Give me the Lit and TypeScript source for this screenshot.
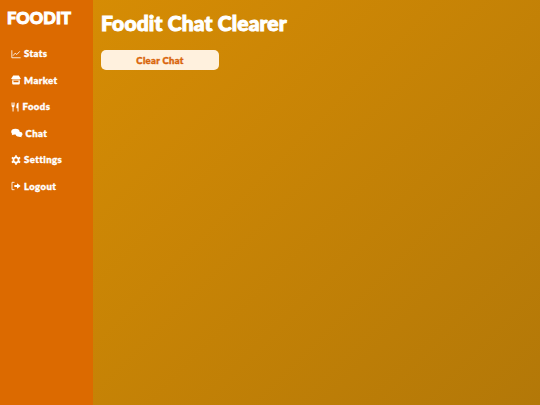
import { LitElement, html, css, svg } from "lit";
import { customElement } from "lit/decorators.js";

const icons: Record<string, unknown> = {
  stats: svg`<path d="M1 1.5V10.5H11.5" fill="none" stroke="currentColor" stroke-width="1"/><path d="M2.5 8L5 5L7 6.6L10.5 2.8" fill="none" stroke="currentColor" stroke-width="1"/>`,
  market: svg`<path d="M2.6 .6H9.4L11.4 4Q11.4 5.4 9.8 5.4H2.2Q.6 5.4 .6 4Z" fill="currentColor"/><path d="M1.4 6.3H10.6V10Q10.6 11.4 9.4 11.4H2.6Q1.4 11.4 1.4 10ZM3 7V8.6H9V7Z" fill="currentColor" fill-rule="evenodd"/>`,
  foods: svg`<path d="M.8 .6V4.6Q.8 6 2.2 6.4V11.4H3.6V6.4Q5 6 5 4.6V.6H4V4H3.4V.6H2.4V4H1.8V.6Z" fill="currentColor"/><path d="M10.6 11.4V.6Q7.6 1.2 7.6 4.4V7.4H9.2V11.4Z" fill="currentColor"/>`,
  chat: svg`<ellipse cx="4.6" cy="4.4" rx="4.4" ry="3.5" fill="currentColor"/><path d="M1.5 6L.8 8.6L4 7.2Z" fill="currentColor"/><ellipse cx="8.4" cy="7.5" rx="3.5" ry="2.9" fill="currentColor"/><path d="M10 9L11.6 11L8 10.2Z" fill="currentColor"/>`,
  settings: svg`<circle cx="6" cy="6" r="3.1" fill="none" stroke="currentColor" stroke-width="2.2"/><path d="M6 .4V2.4M6 9.6V11.6M1 3.1L2.7 4.1M9.3 7.9L11 8.9M1 8.9L2.7 7.9M9.3 4.1L11 3.1" stroke="currentColor" stroke-width="2"/>`,
  logout: svg`<path d="M4.2 1.6H1.2V10.4H4.2" fill="none" stroke="currentColor" stroke-width="1"/><path d="M4 4.9H7.2V2.6L11.6 6L7.2 9.4V7.1H4Z" fill="currentColor"/>`,
};

const items: [string, string][] = [
  ["stats", "Stats"],
  ["market", "Market"],
  ["foods", "Foods"],
  ["chat", "Chat"],
  ["settings", "Settings"],
  ["logout", "Logout"],
];

@customElement("app-root")
export class AppRoot extends LitElement {
  static styles = css`
    :host {
      display: flex;
      width: 540px;
      height: 405px;
      overflow: hidden;
      font-family: "Lato", sans-serif;
      font-weight: 900;
    }
    .side {
      width: 93px;
      flex: none;
      box-sizing: border-box;
      background: #dc6a00;
      color: #fff;
      padding: 8px 0 0 7px;
    }
    .logo {
      font-size: 16.5px;
      line-height: 20px;
      letter-spacing: 0.1px;
      -webkit-text-stroke: 1px #fff;
      margin-bottom: 17px;
    }
    .nav {
      display: flex;
      flex-direction: column;
      gap: 9.6px;
      padding-left: 4px;
    }
    .item {
      display: flex;
      align-items: center;
      gap: 3px;
      height: 17px;
      font-size: 9.5px;
      letter-spacing: 0.45px;
      -webkit-text-stroke: 0.4px #fff;
    }
    .ico {
      width: 10px;
      height: 10px;
      flex: none;
    }
    .ico.foods {
      width: 8.5px;
    }
    .ico.chat {
      width: 11.5px;
    }
    .main {
      flex: 1;
      box-sizing: border-box;
      padding: 10px 8px;
      background: linear-gradient(135deg, #d68c04, #b37808);
    }
    h1 {
      margin: 0 0 14px;
      font-size: 21px;
      line-height: 26px;
      letter-spacing: 0.16px;
      color: #fff;
      font-weight: 900;
      -webkit-text-stroke: 1px #fff;
    }
    button {
      display: block;
      width: 118px;
      height: 20px;
      border: none;
      border-radius: 5px;
      background: #fff1de;
      color: #d9650a;
      font: inherit;
      font-size: 9.5px;
      letter-spacing: 0.3px;
      -webkit-text-stroke: 0.4px #d9650a;
      padding: 0;
    }
  `;

  render() {
    return html`
      <aside class="side">
        <div class="logo">FOODIT</div>
        <nav class="nav">
          ${items.map(
            ([k, label]) => html`<div class="item"><svg class="ico ${k}" viewBox="0 0 12 12" preserveAspectRatio="none">${icons[k]}</svg><span>${label}</span></div>`
          )}
        </nav>
      </aside>
      <main class="main">
        <h1>Foodit Chat Clearer</h1>
        <button>Clear Chat</button>
      </main>
    `;
  }
}
